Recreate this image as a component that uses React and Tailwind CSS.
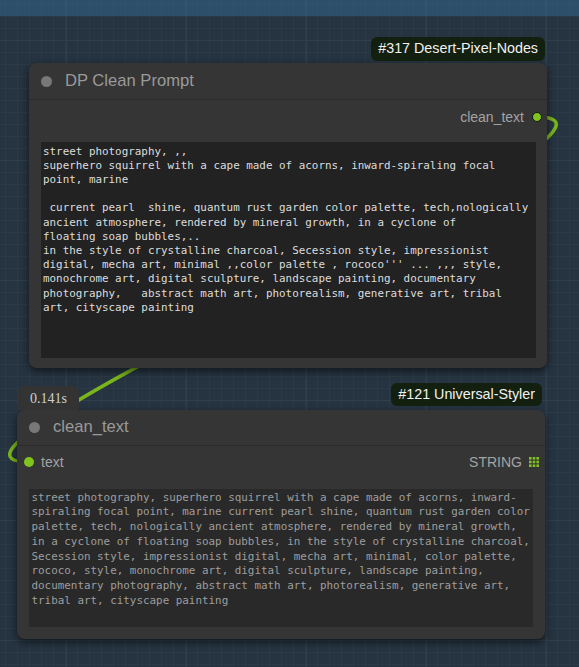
import React from 'react';

const PROMPT_IN = [
  'street photography, ,,',
  'superhero squirrel with a cape made of acorns, inward-spiraling focal',
  'point, marine',
  '',
  ' current pearl  shine, quantum rust garden color palette, tech,nologically',
  'ancient atmosphere, rendered by mineral growth, in a cyclone of',
  'floating soap bubbles,..',
  'in the style of crystalline charcoal, Secession style, impressionist',
  "digital, mecha art, minimal ,,color palette , rococo''' ... ,,, style,",
  'monochrome art, digital sculpture, landscape painting, documentary',
  'photography,   abstract math art, photorealism, generative art, tribal',
  'art, cityscape painting',
].join('\n');

const PROMPT_OUT = [
  'street photography, superhero squirrel with a cape made of acorns, inward-',
  'spiraling focal point, marine current pearl shine, quantum rust garden color',
  'palette, tech, nologically ancient atmosphere, rendered by mineral growth,',
  'in a cyclone of floating soap bubbles, in the style of crystalline charcoal,',
  'Secession style, impressionist digital, mecha art, minimal, color palette,',
  'rococo, style, monochrome art, digital sculpture, landscape painting,',
  'documentary photography, abstract math art, photorealism, generative art,',
  'tribal art, cityscape painting',
].join('\n');

const SANS = 'font-["Liberation_Sans",Arial,sans-serif]';

function Badge({ children, className }) {
  return (
    <div className={`absolute bottom-full flex items-center rounded-[6px] bg-[#13200f] px-[7px] text-[14.3px] text-[#f2f2f2] ${className}`}>
      {children}
    </div>
  );
}

function TitleBar({ title, height }) {
  return (
    <div className={`flex items-center gap-[13px] border-b border-[#2b2b2b] pl-[12px] ${height}`}>
      <div className="h-[11px] w-[11px] rounded-full bg-[#787878]" />
      <span className="text-[16.6px] text-[#9a9a9a]">{title}</span>
    </div>
  );
}

function StringIcon() {
  return (
    <svg width="10" height="10" viewBox="0 0 10 10">
      {[0, 3.7, 7.4].map((y) =>
        [0, 3.7, 7.4].map((x) => (
          <rect key={`${x}-${y}`} x={x} y={y} width="2.6" height="2.6" fill="#7fc21e" />
        ))
      )}
    </svg>
  );
}

export default function App() {
  return (
    <div
      className={`relative h-[667px] w-[579px] overflow-hidden bg-[#263441] ${SANS}
        bg-[linear-gradient(to_right,#2f3f4c_1px,transparent_1px),linear-gradient(to_bottom,#2f3f4c_1px,transparent_1px),linear-gradient(to_right,#2b3a46_1px,transparent_1px),linear-gradient(to_bottom,#2b3a46_1px,transparent_1px)]
        bg-[size:120px_120px,120px_120px,12px_12px,12px_12px]
        bg-[position:66px_40px,66px_40px,5px_4px,5px_4px]`}
    >
      {/* top selection band */}
      <div className="h-[16px] bg-[#3b78a8]/40" />

      {/* link */}
      <svg className="absolute left-0 top-0" width="579" height="667">
        <path d="M537 117 C690 117 -124 462 29 462" fill="none" stroke="#7ab51c" strokeWidth="3.5" />
      </svg>

      {/* Node #317 */}
      <div className="absolute left-[29px] top-[63px] h-[305px] w-[518px] rounded-[8px] bg-[#353535] shadow-[0_3px_8px_rgba(0,0,0,0.6)]">
        <Badge className="right-[2px] mb-[2px] h-[24px]">#317 Desert-Pixel-Nodes</Badge>
        <TitleBar title="DP Clean Prompt" height="h-[37px]" />
        <div className="flex h-[34px] items-center justify-end gap-[8px] pr-[5px]">
          <span className="text-[14px] text-[#a3a3a3]">clean_text</span>
          <div className="h-[10px] w-[10px] rounded-full border border-[#151515] bg-[#80c41e]" />
        </div>
        <div className="ml-[12px] mr-[11px] mt-[8px] h-[216px] bg-[#222222] px-[2px] pt-[2.5px]">
          <div className="whitespace-pre font-['DejaVu_Sans_Mono',monospace] text-[10.9px] leading-[14.2px] text-[#dddddd]">
            {PROMPT_IN}
          </div>
        </div>
      </div>

      {/* Node #121 */}
      <div className="absolute left-[17px] top-[410px] h-[229px] w-[528px] rounded-[8px] bg-[#353535] shadow-[0_3px_8px_rgba(0,0,0,0.6)]">
        <div className="absolute bottom-full left-[1px] flex h-[24px] w-[61px] items-center justify-center rounded-t-[6px] bg-[#333333] font-['Liberation_Serif',serif] text-[14px] text-[#cfcfcf]">
          0.141s
        </div>
        <Badge className="right-[3px] mb-[4px] h-[23px]">#121 Universal-Styler</Badge>
        <TitleBar title="clean_text" height="h-[36px]" />
        <div className="flex h-[32px] items-center pl-[7px] pr-[6px]">
          <div className="h-[10px] w-[10px] rounded-full bg-[#80c41e]" />
          <span className="ml-[7px] text-[14px] text-[#a3a3a3]">text</span>
          <span className="ml-auto text-[14px] text-[#a3a3a3]">STRING</span>
          <div className="ml-[7px] flex items-center">
            <StringIcon />
          </div>
        </div>
        <div className="ml-[11.5px] mr-[12px] mt-[10.5px] h-[138.5px] bg-[#292929] px-[3px] pt-[2px]">
          <div className="whitespace-pre font-['DejaVu_Sans_Mono',monospace] text-[10.9px] leading-[14.75px] text-[#9e9e9e]">
            {PROMPT_OUT}
          </div>
        </div>
      </div>
    </div>
  );
}
